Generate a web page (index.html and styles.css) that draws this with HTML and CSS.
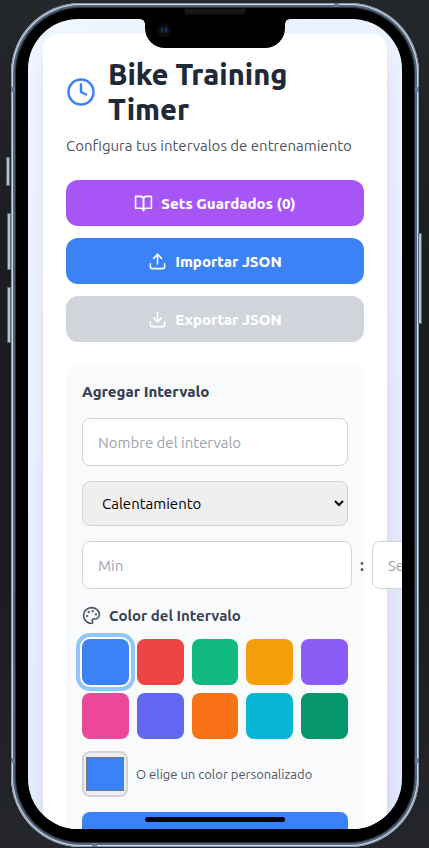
FILE: index.html
```html
<!DOCTYPE html>
<html lang="es">
<head>
  <meta charset="utf-8">
  <meta name="viewport" content="width=device-width, initial-scale=1">
  <title>Bike Training Timer</title>
  <link rel="stylesheet" href="styles.css">
</head>
<body>
  <div class="phone">
    <span class="side-key key-mute"></span>
    <span class="side-key key-up"></span>
    <span class="side-key key-down"></span>
    <span class="side-key key-power"></span>
    <span class="speaker"></span>
    <span class="seam seam-top"></span>
    <span class="seam seam-bottom"></span>
    <span class="seam seam-left"></span>
    <span class="seam seam-left seam-low"></span>
    <span class="seam seam-right"></span>
    <span class="seam seam-right seam-low"></span>
    <div class="bezel">
      <div class="screen">
        <div class="notch"><span class="camera"></span></div>
        <main class="card">
          <header class="header">
            <div class="title-row">
              <svg class="icon icon-clock" viewBox="0 0 24 24"><circle cx="12" cy="12" r="10"/><path d="M12 6v6l4 2"/></svg>
              <h1 class="title">Bike Training Timer</h1>
            </div>
            <p class="subtitle">Configura tus intervalos de entrenamiento</p>
          </header>

          <div class="actions">
            <button class="button button-purple" type="button">
              <svg class="icon" viewBox="0 0 24 24"><path d="M2 3h6a4 4 0 0 1 4 4v14a3 3 0 0 0-3-3H2z"/><path d="M22 3h-6a4 4 0 0 0-4 4v14a3 3 0 0 1 3-3h7z"/></svg>
              Sets Guardados (0)
            </button>
            <button class="button button-blue" type="button">
              <svg class="icon" viewBox="0 0 24 24"><path d="M21 15v4a2 2 0 0 1-2 2H5a2 2 0 0 1-2-2v-4"/><path d="M17 8l-5-5-5 5"/><path d="M12 3v12"/></svg>
              Importar JSON
            </button>
            <button class="button button-gray" type="button" disabled>
              <svg class="icon" viewBox="0 0 24 24"><path d="M21 15v4a2 2 0 0 1-2 2H5a2 2 0 0 1-2-2v-4"/><path d="M7 10l5 5 5-5"/><path d="M12 15V3"/></svg>
              Exportar JSON
            </button>
          </div>

          <form class="panel">
            <h2 class="panel-title">Agregar Intervalo</h2>
            <input class="field" type="text" placeholder="Nombre del intervalo" aria-label="Nombre del intervalo">
            <select class="field select" aria-label="Tipo de intervalo">
              <option>Calentamiento</option>
            </select>
            <div class="time-row">
              <input class="field time-field" type="text" inputmode="numeric" placeholder="Min" aria-label="Minutos">
              <span class="colon">:</span>
              <input class="field time-field" type="text" inputmode="numeric" placeholder="Seg" aria-label="Segundos">
            </div>
            <div class="colors">
              <div class="color-label">
                <svg class="icon icon-palette" viewBox="0 0 24 24"><circle class="dot" cx="13.5" cy="6.5" r=".5"/><circle class="dot" cx="17.5" cy="10.5" r=".5"/><circle class="dot" cx="8.5" cy="7.5" r=".5"/><circle class="dot" cx="6.5" cy="12.5" r=".5"/><path d="M12 2C6.5 2 2 6.5 2 12s4.500 10 10 10c.926 0 1.648-.746 1.648-1.688 0-.437-.18-.835-.437-1.125-.29-.289-.438-.652-.438-1.125a1.640 1.640 0 0 1 1.668-1.668h1.996c3.051 0 5.555-2.503 5.555-5.554C21.965 6.012 17.461 2 12 2z"/></svg>
                Color del Intervalo
              </div>
              <div class="swatches">
                <button class="swatch blue selected" type="button" aria-label="Azul"></button>
                <button class="swatch red" type="button" aria-label="Rojo"></button>
                <button class="swatch green" type="button" aria-label="Verde"></button>
                <button class="swatch amber" type="button" aria-label="Ámbar"></button>
                <button class="swatch violet" type="button" aria-label="Violeta"></button>
                <button class="swatch pink" type="button" aria-label="Rosa"></button>
                <button class="swatch indigo" type="button" aria-label="Índigo"></button>
                <button class="swatch orange" type="button" aria-label="Naranja"></button>
                <button class="swatch cyan" type="button" aria-label="Cian"></button>
                <button class="swatch emerald" type="button" aria-label="Esmeralda"></button>
              </div>
              <div class="custom-row">
                <input class="picker" id="custom-color" type="color" value="#3b82f6">
                <label class="custom-label" for="custom-color">O elige un color personalizado</label>
              </div>
            </div>
            <button class="button button-blue button-submit" type="button" aria-label="Agregar Intervalo">
              <svg class="icon" viewBox="0 0 24 24"><path d="M12 5v14"/><path d="M5 12h14"/></svg>
            </button>
          </form>
        </main>
        <span class="home-bar"></span>
      </div>
    </div>
  </div>
</body>
</html>
```
FILE: styles.css
```css
*,
*::before,
*::after {
  box-sizing: border-box;
}

body {
  margin: 0;
  height: 100vh;
  padding: 3px 10px 1px 11px;
  background: linear-gradient(180deg, #24282b, #1a1e20 30%, #1a1e20 70%, #24262b);
  color: #1f2937;
  font-family: Ubuntu, "Noto Sans", sans-serif;
  font-size: 16px;
  line-height: 23px;
}

h1,
h2,
p {
  margin: 0;
}

button,
input,
select {
  font: inherit;
}

/* Device frame */
.phone {
  position: relative;
  height: 100%;
  padding: 5px;
  border-radius: 70px;
  background: #50627a;
  box-shadow: inset 0 0 0 1px #8695a8, inset 0 0 0 2px #d0d9e4;
}

.bezel {
  height: 100%;
  padding: 11px 12px 13px;
  border-radius: 65px;
  background: #000;
  box-shadow: 0 0 0 1px #28313c;
}

.side-key {
  position: absolute;
  left: -4px;
  width: 4px;
  border: 1px solid #5b6678;
  background: #b4bfd2;
}

.key-mute {
  top: 154px;
  left: -5px;
  height: 29px;
}

.key-up {
  top: 210px;
  height: 57px;
}

.key-down {
  top: 284px;
  height: 56px;
}

.key-power {
  top: 230px;
  right: -3px;
  left: auto;
  height: 91px;
}

.seam {
  position: absolute;
  background: #66769a;
}

.seam-top {
  top: 0;
  right: 80px;
  width: 5px;
  height: 4px;
}

.seam-bottom {
  bottom: 0;
  left: 81px;
  width: 5px;
  height: 4px;
}

.seam-left,
.seam-right {
  top: 84px;
  width: 4px;
  height: 5px;
}

.seam-left {
  left: 0;
}

.seam-right {
  right: 0;
}

.seam-low {
  top: auto;
  bottom: 84px;
}

.speaker {
  position: absolute;
  top: 5px;
  left: 50%;
  width: 62px;
  height: 7px;
  border-radius: 0 0 3px 3px;
  background: #171717;
  border: 1px solid #090909;
  transform: translateX(-50%);
}

.screen {
  position: relative;
  height: 100%;
  padding: 15px;
  overflow: hidden;
  border-radius: 50px;
  background: linear-gradient(135deg, #eff6ff, #e0e7ff);
}

.notch {
  position: absolute;
  z-index: 2;
  top: 0;
  left: 50%;
  width: 140px;
  height: 29px;
  border-radius: 0 0 20px 20px;
  background: #000;
  transform: translateX(-50%);
}

.notch::before,
.notch::after {
  content: "";
  position: absolute;
  top: 0;
  width: 4px;
  height: 4px;
}

.notch::before {
  right: 100%;
  background: radial-gradient(circle at 0 100%, transparent 3px, #000 4px);
}

.notch::after {
  left: 100%;
  background: radial-gradient(circle at 100% 100%, transparent 3px, #000 4px);
}

.camera {
  position: absolute;
  top: 4px;
  left: 12px;
  width: 14px;
  height: 14px;
  border-radius: 50%;
  background:
    radial-gradient(ellipse 2px 4px at 9px 7px, #28409a, transparent),
    radial-gradient(ellipse 2px 4px at 5px 7px, #1c4450, transparent),
    #0c0c10;
}

.home-bar {
  position: absolute;
  z-index: 2;
  bottom: 7px;
  left: 50%;
  width: 140px;
  height: 5px;
  border-radius: 3px;
  background: #000;
  transform: translateX(-50%);
}

/* App */
.card {
  padding: 23px;
  border-radius: 15px;
  background: #fff;
  box-shadow: 0 19px 24px -5px rgb(0 0 0 / 10%), 0 8px 10px -6px rgb(0 0 0 / 10%);
}

.icon {
  flex: none;
  width: 19px;
  height: 19px;
  fill: none;
  stroke: currentColor;
  stroke-width: 2;
  stroke-linecap: round;
  stroke-linejoin: round;
}

.icon-clock {
  width: 30px;
  height: 30px;
  color: #3b82f6;
}

.icon-palette {
  color: #4b5563;
}

.dot {
  fill: currentColor;
}

.title-row {
  display: flex;
  align-items: center;
  gap: 12px;
  margin-bottom: 7px;
}

.title {
  font-size: 29px;
  font-weight: 800;
  line-height: 35px;
}

.subtitle {
  color: #4b5563;
  white-space: nowrap;
  font-size: 15px;
  font-weight: 450;
}

.actions {
  display: grid;
  gap: 12px;
  margin: 23px 0;
}

.button {
  display: flex;
  align-items: center;
  justify-content: center;
  gap: 8px;
  width: 100%;
  height: 46px;
  padding: 0;
  border: 0;
  border-radius: 12px;
  color: #fff;
  font-size: 15px;
  font-weight: 800;
}

.button-purple {
  background: #a855f7;
}

.button-blue {
  background: #3b82f6;
}

.button-gray {
  background: #d1d5db;
}

.button-submit {
  border-radius: 8px;
}

.panel {
  display: grid;
  grid-template-columns: minmax(0, 1fr);
  gap: 15px;
  padding: 15px 16px;
  border-radius: 12px;
  background: #f9fafb;
}

.panel-title {
  color: #374151;
  font-size: 15px;
  font-weight: 800;
}

.field {
  width: 100%;
  height: 48px;
  padding: 0 15px;
  border: 1px solid #d1d5db;
  border-radius: 8px;
  background: #fff;
  font-size: 15px;
  font-weight: 450;
}

.field::placeholder {
  color: #9ca3af;
  opacity: 1;
}

.select {
  height: 45px;
  background: #efefef;
  color: #000;
}

.time-row {
  display: flex;
  align-items: center;
  gap: 8px;
}

.time-field {
  flex: none;
  width: calc(100% + 4px);
}

.colon {
  color: #4b5563;
  font-weight: 700;
}

.color-label {
  display: flex;
  align-items: center;
  gap: 8px;
  margin-bottom: 12px;
  color: #374151;
  font-size: 15px;
  font-weight: 600;
}

.swatches {
  display: grid;
  grid-template-columns: repeat(5, 1fr);
  gap: 8px;
}

.swatch {
  height: 46px;
  padding: 0;
  border: 0;
  border-radius: 8px;
}

.selected {
  box-shadow: 0 0 0 2px #fff, 0 0 0 6px #93c5fd;
}

.blue { background: #3b82f6; }
.red { background: #ef4444; }
.green { background: #10b981; }
.amber { background: #f59e0b; }
.violet { background: #8b5cf6; }
.pink { background: #ec4899; }
.indigo { background: #6366f1; }
.orange { background: #f97316; }
.cyan { background: #06b6d4; }
.emerald { background: #059669; }

.custom-row {
  display: flex;
  align-items: center;
  gap: 8px;
  margin-top: 12px;
}

.picker {
  width: 46px;
  height: 46px;
  padding: 0;
  border: 2px solid #d1d5db;
  border-radius: 8px;
  background: #efefef;
}

.custom-label {
  color: #4b5563;
  font-size: 13px;
  font-weight: 450;
}
```
